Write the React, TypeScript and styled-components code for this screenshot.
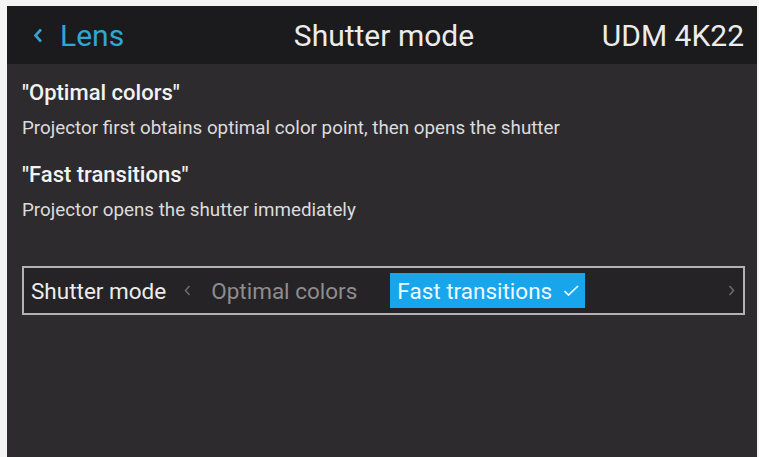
import styled, { createGlobalStyle } from 'styled-components';

const GlobalStyle = createGlobalStyle`
  html, body {
    margin: 0;
    padding: 0;
    background: #f4f4f4;
    font-family: Roboto, 'Liberation Sans', sans-serif;
  }
`;

const descriptions = [
  {
    title: '"Optimal colors"',
    text: 'Projector first obtains optimal color point, then opens the shutter',
  },
  {
    title: '"Fast transitions"',
    text: 'Projector opens the shutter immediately',
  },
];

const options = [
  { label: 'Optimal colors', selected: false },
  { label: 'Fast transitions', selected: true },
];

const Chevron = ({ dir }: { dir: 'left' | 'right' }) => (
  <svg width='7' height='11' viewBox='0 0 7 11'>
    <path
      d={dir === 'left' ? 'M5.5 1 L1.5 5.5 L5.5 10' : 'M1.5 1 L5.5 5.5 L1.5 10'}
      fill='none'
      stroke='currentColor'
      strokeWidth='1.6'
    />
  </svg>
);

export default function App() {
  return (
    <>
      <GlobalStyle />
      <Frame>
        <Screen>
          <Header>
            <Back>
              <BackArrow>
                <svg width='10' height='15' viewBox='0 0 10 15'>
                  <path d='M8 1.5 L2.5 7.5 L8 13.5' fill='none' stroke='currentColor' strokeWidth='2.6' />
                </svg>
              </BackArrow>
              Lens
            </Back>
            <Title>Shutter mode</Title>
            <Model>UDM 4K22</Model>
          </Header>
          <Body>
            {descriptions.map((d) => (
              <Description key={d.title}>
                <DescTitle>{d.title}</DescTitle>
                <DescText>{d.text}</DescText>
              </Description>
            ))}
            <Selector>
              <SelectorLabel>Shutter mode</SelectorLabel>
              <Arrow $side='left'>
                <Chevron dir='left' />
              </Arrow>
              {options.map((o) => (
                <Option key={o.label} $selected={o.selected}>
                  {o.label}
                  {o.selected && (
                    <svg width='17' height='13' viewBox='0 0 17 13'>
                      <path d='M1.5 7 L5.5 11 L15 2' fill='none' stroke='currentColor' strokeWidth='1.7' />
                    </svg>
                  )}
                </Option>
              ))}
              <Arrow $side='right'>
                <Chevron dir='right' />
              </Arrow>
            </Selector>
          </Body>
        </Screen>
      </Frame>
    </>
  );
}

const Frame = styled.div`
  padding: 6px 2px 0 7px;
  height: 457px;
  box-sizing: border-box;
`;

const Screen = styled.div`
  height: 100%;
  background: #2e2b2f;
  display: flex;
  flex-direction: column;
`;

const Header = styled.div`
  height: 58px;
  flex-shrink: 0;
  background: #1b1a1d;
  display: grid;
  grid-template-columns: 1fr auto 1fr;
  align-items: center;
  padding: 0 13px 0 26px;
  font-size: 30px;
  color: #ececec;
`;

const Back = styled.div`
  display: flex;
  align-items: center;
  color: #2fa6d6;
  gap: 17px;
`;

const BackArrow = styled.span`
  display: flex;
  margin-top: 1px;
`;

const Title = styled.div`
  margin-right: 9px;
`;

const Model = styled.div`
  justify-self: end;
`;

const Body = styled.div`
  padding: 16px 12px 0 15px;
  display: flex;
  flex-direction: column;
`;

const Description = styled.div`
  margin-bottom: 22px;
`;

const DescTitle = styled.div`
  font-size: 22px;
  font-weight: 500;
  color: #f2f2f2;
  line-height: 26px;
`;

const DescText = styled.div`
  font-size: 18.8px;
  color: #dcdcdc;
  line-height: 24px;
  margin-top: 10px;
`;

const Selector = styled.div`
  margin-top: 22px;
  height: 45px;
  border: 2px solid #b4b2b4;
  display: flex;
  align-items: center;
  padding: 0 8px 0 7px;
  background: #252326;
`;

const SelectorLabel = styled.div`
  font-size: 22.5px;
  color: #ececec;
`;

const Arrow = styled.span<{ $side: 'left' | 'right' }>`
  display: flex;
  color: #6c6a6c;
  margin: ${({ $side }) => ($side === 'left' ? '0 20px 0 18px' : '0 0 0 auto')};
`;

const Option = styled.div<{ $selected: boolean }>`
  display: flex;
  align-items: center;
  gap: 11px;
  height: 35px;
  box-sizing: border-box;
  padding: ${({ $selected }) => ($selected ? '0 5px 0 7px' : '0')};
  margin-right: 33px;
  font-size: 22.5px;
  color: ${({ $selected }) => ($selected ? '#eef8ff' : '#8e8c8e')};
  background: ${({ $selected }) => ($selected ? '#17a6ec' : 'transparent')};
`;
